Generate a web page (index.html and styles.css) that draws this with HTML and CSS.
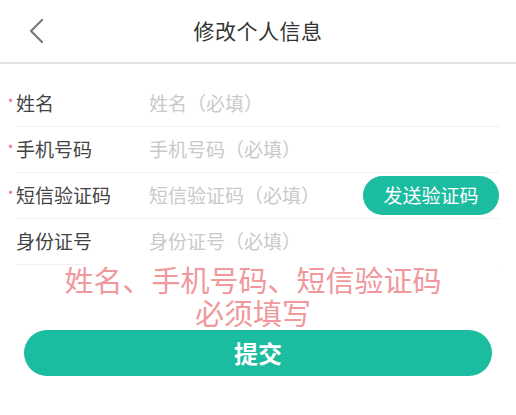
FILE: index.html
```html
<!DOCTYPE html>
<html lang="zh-CN">
<head>
<meta charset="utf-8">
<title>修改个人信息</title>
<link rel="stylesheet" href="styles.css">
</head>
<body>
<div class="page">
  <header class="header">
    <span class="back">
      <svg width="16" height="26" viewBox="0 0 16 26"><polyline points="13,2 2,13 13,24" fill="none" stroke="#7a7a7a" stroke-width="2.2" stroke-linecap="round" stroke-linejoin="round"/></svg>
    </span>
    <h1 class="title">修改个人信息</h1>
  </header>
  <form class="form">
    <div class="row">
      <label class="label"><span class="star">*</span>姓名</label>
      <span class="placeholder">姓名（必填）</span>
    </div>
    <div class="row">
      <label class="label"><span class="star">*</span>手机号码</label>
      <span class="placeholder">手机号码（必填）</span>
    </div>
    <div class="row">
      <label class="label"><span class="star">*</span>短信验证码</label>
      <span class="placeholder">短信验证码（必填）</span>
      <button type="button" class="send">发送验证码</button>
    </div>
    <div class="row">
      <label class="label">身份证号</label>
      <span class="placeholder">身份证号（必填）</span>
    </div>
    <button type="button" class="submit">提交</button>
  </form>
  <div class="toast"><p class="toast-text">姓名、手机号码、短信验证码<br>必须填写</p></div>
</div>
</body>
</html>
```
FILE: styles.css
```css
html, body {
  margin: 0;
  padding: 0;
  background: #fff;
}
body {
  font-family: "Noto Sans CJK SC", "Noto Sans", sans-serif;
  color: #333;
}
.page {
  position: relative;
  width: 516px;
  height: 415px;
  overflow: hidden;
}
.header {
  height: 62px;
  border-bottom: 2px solid #e2e2e2;
  display: flex;
  align-items: center;
  justify-content: center;
  position: relative;
}
.back {
  position: absolute;
  left: 29px;
  top: 18px;
  display: flex;
}
.title {
  margin: 0;
  padding-bottom: 2px;
  font-size: 21px;
  font-weight: normal;
  color: #333;
  letter-spacing: 0.5px;
}
.form {
  margin: 17px 0 0 0;
  display: flex;
  flex-direction: column;
}
.row {
  margin: 0 17px 0 16px;
  height: 45px;
  border-bottom: 1px solid #f1f1f1;
  display: flex;
  align-items: center;
}
.label {
  width: 133px;
  flex: none;
  font-size: 19px;
  color: #444;
  line-height: 1;
  padding-bottom: 3px;
}
.star {
  display: inline-block;
  width: 8px;
  margin-left: -8px;
  font-size: 11px;
  color: #f04864;
  vertical-align: 4px;
}
.placeholder {
  font-size: 19px;
  color: #c9c9c9;
  line-height: 1;
  flex: 1;
  padding-bottom: 3px;
}
.send {
  width: 136px;
  height: 39px;
  border: none;
  border-radius: 20px;
  background: #1bbc9f;
  color: #fff;
  font-family: inherit;
  font-size: 19px;
  padding: 0 0 2px 0;
}
.submit {
  margin: 65px 24px 0 24px;
  height: 46px;
  border: none;
  border-radius: 23px;
  background: #1bbc9f;
  color: #fff;
  font-family: inherit;
  font-size: 24px;
  font-weight: bold;
  padding: 0 0 2px 0;
}
.toast {
  position: absolute;
  left: 85px;
  right: 19px;
  top: 263px;
  height: 65px;
  background: #fff;
}
.toast-text {
  position: relative;
  left: -38px;
  margin: 0;
  text-align: center;
  font-size: 29px;
  line-height: 33px;
  color: #f0989c;
}
```
